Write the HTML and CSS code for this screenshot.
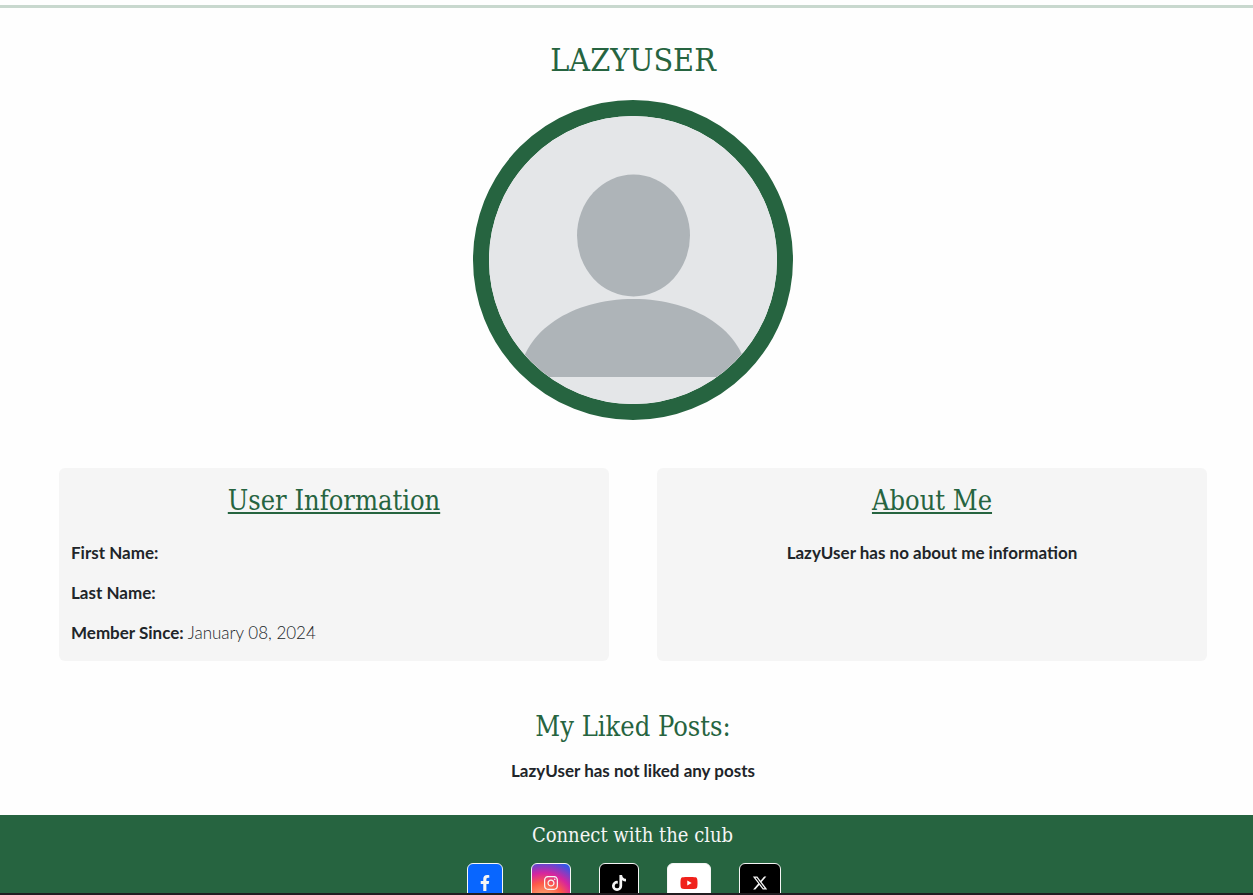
FILE: index.html
```html
<!DOCTYPE html>
<html lang="en">
<head>
<meta charset="utf-8">
<meta name="viewport" content="width=device-width, initial-scale=1">
<title>LazyUser</title>
<link rel="stylesheet" href="styles.css">
</head>
<body>
<div class="page">
  <main class="profile">
    <h1 class="username">LAZYUSER</h1>
    <svg class="avatar" viewBox="0 0 288 288" role="img" aria-label="Default profile picture">
      <rect width="288" height="288" fill="#e4e6e8"/>
      <ellipse cx="144.500" cy="119.500" rx="56.500" ry="61" fill="#aeb4b8"/>
      <path d="M30 261C34 215 83 183 144.500 183S255 215 259 261Z" fill="#aeb4b8"/>
    </svg>
    <div class="cards">
      <section class="card">
        <h2 class="heading underlined">User Information</h2>
        <p class="line"><strong>First Name:</strong></p>
        <p class="line"><strong>Last Name:</strong></p>
        <p class="line"><strong>Member Since:</strong> January 08, 2024</p>
      </section>
      <section class="card">
        <h2 class="heading underlined">About Me</h2>
        <p class="line centered"><strong>LazyUser has no about me information</strong></p>
      </section>
    </div>
    <section class="liked">
      <h2 class="heading">My Liked Posts:</h2>
      <p class="line centered"><strong>LazyUser has not liked any posts</strong></p>
    </section>
  </main>
  <footer class="footer">
    <h2 class="connect">Connect with the club</h2>
    <nav class="socials" aria-label="Social media">
      <a class="social facebook" href="#" aria-label="Facebook"><svg viewBox="0 0 320 512"><path d="M279.140 288l14.220-92.660h-88.910v-60.130c0-25.350 12.420-50.060 52.240-50.060h40.420V6.260S260.430 0 225.360 0c-73.220 0-121.080 44.380-121.080 124.720v70.620H22.890V288h81.390v224h100.170V288z"/></svg></a>
      <a class="social instagram" href="#" aria-label="Instagram"><svg viewBox="0 0 448 512"><path d="M224.100 141c-63.600 0-114.900 51.300-114.900 114.900s51.300 114.900 114.900 114.900S339 319.500 339 255.900 287.700 141 224.100 141zm0 189.600c-41.100 0-74.700-33.500-74.700-74.700s33.500-74.700 74.700-74.700 74.700 33.500 74.700 74.700-33.600 74.700-74.700 74.700zm146.400-194.300c0 14.900-12 26.800-26.800 26.800-14.900 0-26.800-12-26.800-26.800s12-26.800 26.800-26.800 26.800 12 26.800 26.800zm76.100 27.200c-1.700-35.900-9.900-67.700-36.200-93.900-26.200-26.200-58-34.400-93.900-36.200-37-2.100-147.900-2.100-184.900 0-35.800 1.700-67.600 9.900-93.900 36.100s-34.400 58-36.200 93.900c-2.100 37-2.100 147.900 0 184.900 1.700 35.900 9.900 67.700 36.200 93.900s58 34.400 93.900 36.200c37 2.100 147.900 2.100 184.900 0 35.900-1.700 67.700-9.900 93.900-36.200 26.200-26.200 34.400-58 36.200-93.900 2.100-37 2.100-147.800 0-184.800zM398.800 388c-7.800 19.600-22.900 34.700-42.600 42.600-29.500 11.700-99.500 9-132.100 9s-102.700 2.600-132.100-9c-19.600-7.800-34.700-22.900-42.600-42.600-11.700-29.500-9-99.500-9-132.100s-2.600-102.700 9-132.100c7.800-19.600 22.900-34.700 42.600-42.600 29.500-11.700 99.500-9 132.100-9s102.700-2.600 132.100 9c19.600 7.800 34.700 22.900 42.600 42.600 11.700 29.500 9 99.500 9 132.100s2.700 102.700-9 132.100z"/></svg></a>
      <a class="social dark" href="#" aria-label="TikTok"><svg viewBox="0 0 448 512"><path d="M448 209.910a210.060 210.060 0 0 1-122.770-39.250V349.380A162.550 162.550 0 1 1 185 188.310V278.200a74.620 74.620 0 1 0 52.230 71.180V0h88a121.180 121.180 0 0 0 1.860 22.170A122.180 122.180 0 0 0 381 102.390a121.430 121.430 0 0 0 67 20.140z"/></svg></a>
      <a class="social youtube" href="#" aria-label="YouTube"><svg viewBox="0 0 576 512"><path d="M549.655 124.083c-6.281-23.650-24.787-42.276-48.284-48.597C458.781 64 288 64 288 64S117.220 64 74.629 75.486c-23.497 6.322-42.003 24.947-48.284 48.597-11.412 42.867-11.412 132.305-11.412 132.305s0 89.438 11.412 132.305c6.281 23.650 24.787 41.500 48.284 47.821C117.220 448 288 448 288 448s170.780 0 213.371-11.486c23.497-6.321 42.003-24.171 48.284-47.821 11.412-42.867 11.412-132.305 11.412-132.305s0-89.438-11.412-132.305zm-317.510 213.508V175.185l142.739 81.205-142.739 81.201z"/></svg></a>
      <a class="social dark" href="#" aria-label="X"><svg viewBox="0 0 512 512"><path d="M389.200 48h70.600L305.600 224.200 487 464H345L233.700 318.600 106.500 464H35.800L200.700 275.500 26.800 48H172.400L272.900 180.900 389.200 48zM364.400 421.800h39.100L151.100 88h-42L364.400 421.800z"/></svg></a>
    </nav>
  </footer>
</div>
</body>
</html>
```
FILE: styles.css
```css
* { box-sizing: border-box; }

body {
  margin: 0;
  background: #fefefe;
  color: #212529;
  font: 300 17px/24px Lato, "Open Sans", sans-serif;
}

.page {
  display: flex;
  flex-direction: column;
  height: 100vh;
  overflow: hidden;
  border-bottom: 2px solid #211d21;
}

.profile {
  display: flex;
  flex-direction: column;
  flex: none;
  margin-top: 5px;
  padding: 32px 46px 32px 59px;
  border-top: 3px solid #c8d8ce;
}

.username,
.heading,
.connect {
  margin: 0;
  font-family: "DejaVu Serif Condensed", "DejaVu Serif", serif;
  font-weight: 400;
  text-align: center;
}

.username {
  color: #266440;
  font-size: 32px;
  line-height: 40px;
}

.avatar {
  align-self: center;
  width: 320px;
  height: 320px;
  margin-top: 20px;
  border: 16px solid #266440;
  border-radius: 50%;
}

.cards {
  display: grid;
  grid-template-columns: 1fr 1fr;
  gap: 48px;
  margin-top: 48px;
}

.card {
  padding: 16px 12px;
  border-radius: 6px;
  background: #f5f5f5;
}

.heading {
  color: #266440;
  font-size: 27px;
  line-height: 33px;
}

.underlined {
  margin-bottom: 24px;
  text-decoration: underline 2px;
  text-underline-offset: 2px;
}

.line { margin: 0 0 16px; }
.line:last-child { margin-bottom: 0; }
.centered { text-align: center; }
strong { font-weight: 700; }

.liked { margin-top: 49px; }
.liked .heading { margin-bottom: 16px; }

.footer {
  flex: 1 0 auto;
  padding: 8px 0 16px 12px;
  background: #266440;
}

.connect {
  color: #f5f5f5;
  font-size: 20px;
  line-height: 24px;
}

.socials {
  display: flex;
  justify-content: center;
  gap: 28px;
  margin-top: 16px;
  padding-right: 17px;
}

.social {
  display: flex;
  align-items: center;
  height: 40px;
  padding: 0 12px;
  border: 1px solid #f5f5f5;
  border-radius: 6px;
  color: #f5f5f5;
}

.social svg {
  display: block;
  height: 16px;
  fill: currentColor;
}

.facebook { background: #0866ff; }
.instagram { background: radial-gradient(circle at 30% 107%, #fdf497 0%, #fdb073 15%, #fd5949 45%, #d6249f 65%, #285aeb 95%); }
.dark { background: #000; }
.youtube { background: #fff; color: #f0211b; }
```
